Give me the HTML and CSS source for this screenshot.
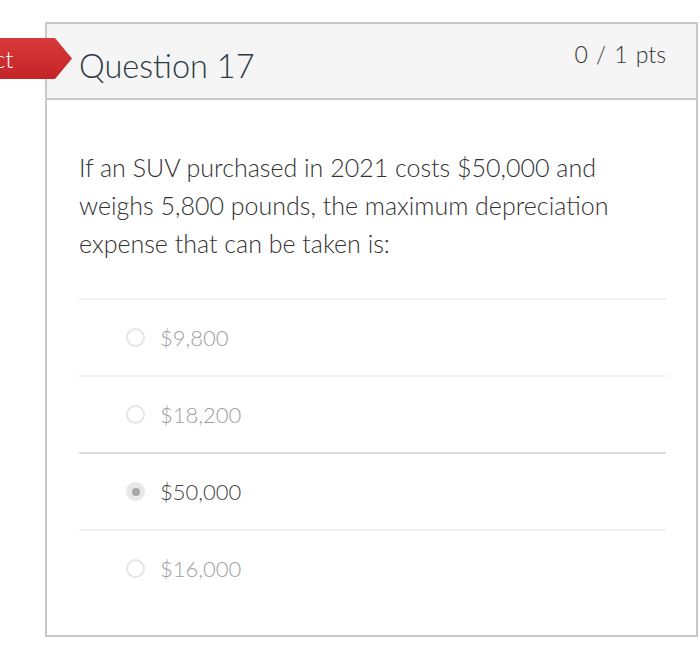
FILE: index.html
```html
<!DOCTYPE html>
<html>
<head>
<meta charset="utf-8">
<link rel="stylesheet" href="styles.css">
</head>
<body>
<div class="page">
  <div class="tag">ct</div>
  <div class="card">
    <div class="header">
      <h2 class="title">Question 17</h2>
      <div class="pts">0 / 1 pts</div>
    </div>
    <div class="content">
      <p class="question">If an SUV purchased in 2021 costs $50,000 and weighs 5,800 pounds, the maximum depreciation expense that can be taken is:</p>
      <div class="answers">
        <div class="answer"><span class="radio"></span><span class="label">$9,800</span></div>
        <div class="answer"><span class="radio"></span><span class="label">$18,200</span></div>
        <div class="answer selected"><span class="radio"><span class="dot"></span></span><span class="label">$50,000</span></div>
        <div class="answer"><span class="radio"></span><span class="label">$16,000</span></div>
      </div>
    </div>
  </div>
</div>
</body>
</html>
```
FILE: styles.css
```css
html, body {
  margin: 0;
  padding: 0;
  background: #fff;
}
body {
  font-family: Lato, "Noto Sans", sans-serif;
  color: #333;
}
.page {
  position: relative;
  padding: 22px 2px 0 45px;
}
.tag {
  position: absolute;
  left: 0;
  top: 38px;
  width: 72px;
  height: 41px;
  background: linear-gradient(#d8393a, #c42427);
  clip-path: polygon(0 0, 55px 0, 72px 50%, 55px 100%, 0 100%);
  color: #fff;
  font-size: 24px;
  font-weight: 300;
  line-height: 41px;
  text-indent: -6px;
  z-index: 2;
}
.card {
  border: 2px solid #c8c8c8;
  width: 653px;
  box-sizing: border-box;
}
.header {
  background: #f5f5f5;
  border-bottom: 2px solid #c8c8c8;
  height: 74px;
  display: flex;
  justify-content: space-between;
  padding: 0 30px 0 32px;
}
.title {
  margin: 0;
  font-weight: 300;
  font-size: 32.5px;
  color: #2d3b45;
  padding-top: 23px;
  line-height: 38px;
}
.pts {
  font-size: 23px;
  font-weight: 300;
  color: #333;
  padding-top: 16px;
  line-height: 28px;
  word-spacing: 2px;
}
.content {
  padding: 48px 30px 29px 32px;
}
.question {
  margin: 0 0 36px;
  font-size: 25px;
  line-height: 38px;
  color: #333;
  font-weight: 300;
}
.answers {
  display: flex;
  flex-direction: column;
}
.answer {
  border-top: 2px solid #f0f0f0;
  height: 75px;
  display: flex;
  align-items: center;
  padding-left: 47px;
  gap: 15px;
}
.answer.selected {
  border-top-color: #dcdcdc;
}
.radio {
  width: 19px;
  height: 19px;
  box-sizing: border-box;
  border: 2px solid #e6e6e6;
  border-radius: 50%;
  display: flex;
  align-items: center;
  justify-content: center;
}
.selected .radio {
  background: #e8e8e8;
  border-color: #e8e8e8;
}
.dot {
  width: 8px;
  height: 8px;
  border-radius: 50%;
  background: #a8a8a8;
}
.label {
  font-size: 22px;
  font-weight: 300;
  color: #a0a0a0;
}
.selected .label {
  color: #444;
}
```
